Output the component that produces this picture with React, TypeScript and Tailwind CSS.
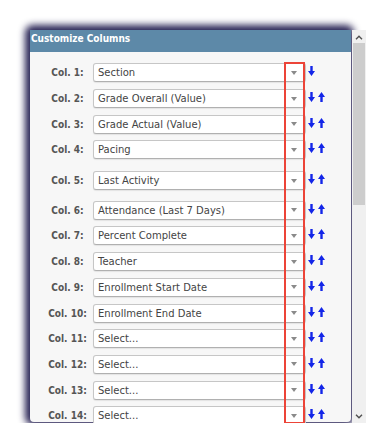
import React from 'react'

const ROWS: { label: string; value: string; up: boolean; extra?: boolean }[] = [
  { label: 'Col. 1:', value: 'Section', up: false },
  { label: 'Col. 2:', value: 'Grade Overall (Value)', up: true },
  { label: 'Col. 3:', value: 'Grade Actual (Value)', up: true },
  { label: 'Col. 4:', value: 'Pacing', up: true },
  { label: 'Col. 5:', value: 'Last Activity', up: true, extra: true },
  { label: 'Col. 6:', value: 'Attendance (Last 7 Days)', up: true },
  { label: 'Col. 7:', value: 'Percent Complete', up: true },
  { label: 'Col. 8:', value: 'Teacher', up: true },
  { label: 'Col. 9:', value: 'Enrollment Start Date', up: true },
  { label: 'Col. 10:', value: 'Enrollment End Date', up: true },
  { label: 'Col. 11:', value: 'Select...', up: true },
  { label: 'Col. 12:', value: 'Select...', up: true },
  { label: 'Col. 13:', value: 'Select...', up: true },
  { label: 'Col. 14:', value: 'Select...', up: true },
]

const CONDENSED = { fontFamily: '"DejaVu Sans Condensed", "DejaVu Sans", Tahoma, sans-serif' }
const WIDE = { fontFamily: '"DejaVu Sans", Verdana, sans-serif' }

function ArrowDown() {
  return (
    <svg width="7" height="10" viewBox="0 0 7 10" className="shrink-0">
      <path d="M2.3 0h2.4v5H7L3.5 10 0 5h2.3z" fill="#1326e8" />
    </svg>
  )
}

function ArrowUp() {
  return (
    <svg width="7" height="10" viewBox="0 0 7 10" className="shrink-0">
      <path d="M2.3 10h2.4V5H7L3.5 0 0 5h2.3z" fill="#1326e8" />
    </svg>
  )
}

function Row({ label, value, up, extra }: (typeof ROWS)[number]) {
  return (
    <div className={`flex h-[25.7px] items-center ${extra ? 'mt-[5px] mb-[4px]' : ''}`}>
      <div className="w-[39px] text-center text-[10px] font-bold text-[#555]">{label}</div>
      <div className="ml-[6px] flex h-[19px] w-[213px] items-center justify-between rounded-[3px] border border-[#c6c6c6] border-b-[#b0b0b0] bg-white pl-[4px] pr-[8px] shadow-[0_1px_1px_rgba(0,0,0,0.08)]">
        <span className="text-[10px] text-[#444]" style={WIDE}>
          {value}
        </span>
        <span className="h-0 w-0 border-x-[3px] border-t-[4px] border-x-transparent border-t-[#8a8a8a]" />
      </div>
      <div className="ml-[2px] flex items-center gap-[3px] pb-[3px]">
        <ArrowDown />
        {up && <ArrowUp />}
      </div>
    </div>
  )
}

export default function App() {
  return (
    <div className="relative h-[423px] w-[366px] overflow-hidden bg-white" style={CONDENSED}>
      <div className="flex pt-[30px]">
        <div className="ml-[30px] h-[392px] w-[321px] rounded-[4px] bg-[#f7f7f7] shadow-[-1px_-1px_7px_4px_rgba(24,18,72,0.92)]">
          <div className="h-[22px] bg-[#5d89a8] pl-[1px] pt-[2px] text-[10px] font-bold leading-[14px] text-white">
            Customize Columns
          </div>
          <div className="pl-[18px] pt-[8px]">
            {ROWS.map((r) => (
              <Row key={r.label} {...r} />
            ))}
          </div>
        </div>
        <div className="relative z-10 ml-[1px] flex h-[393px] w-[14px] flex-col items-center bg-[#f0f0f0]">
          <svg width="8" height="5" viewBox="0 0 8 5" className="mt-[5px]">
            <path d="M1 4.2 4 1.2l3 3" fill="none" stroke="#505050" strokeWidth="1.4" />
          </svg>
          <div className="mt-[3px] h-[162px] w-[12px] bg-[#cdcdcd]" />
          <div className="flex-1" />
          <svg width="8" height="5" viewBox="0 0 8 5" className="mb-[4px]">
            <path d="M1 0.8 4 3.8l3-3" fill="none" stroke="#505050" strokeWidth="1.4" />
          </svg>
        </div>
      </div>
      {/* red highlight box */}
      <div className="absolute left-[284px] top-[62px] h-[362px] w-[21px] border-2 border-[#ec4438]" />
    </div>
  )
}
